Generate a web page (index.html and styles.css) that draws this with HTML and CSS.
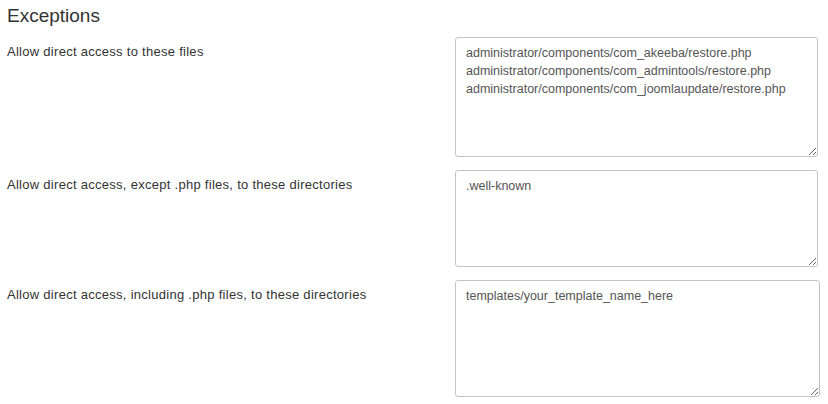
FILE: index.html
```html
<!DOCTYPE html>
<html>
<head>
<meta charset="utf-8">
<link rel="stylesheet" href="styles.css">
</head>
<body>
<div class="page">
  <h3 class="title">Exceptions</h3>
  <div class="row">
    <label class="label">Allow direct access to these files</label>
    <textarea class="field field-files">administrator/components/com_akeeba/restore.php
administrator/components/com_admintools/restore.php
administrator/components/com_joomlaupdate/restore.php</textarea>
  </div>
  <div class="row">
    <label class="label">Allow direct access, except .php files, to these directories</label>
    <textarea class="field field-dirs">.well-known</textarea>
  </div>
  <div class="row">
    <label class="label">Allow direct access, including .php files, to these directories</label>
    <textarea class="field field-php">templates/your_template_name_here</textarea>
  </div>
</div>
</body>
</html>
```
FILE: styles.css
```css
html, body {
  margin: 0;
  padding: 0;
  background: #fff;
}
.page {
  padding: 5px 0 0 7px;
  font-family: "Liberation Sans", Arial, sans-serif;
  color: #333;
}
.title {
  margin: 0 0 10px 0;
  font-size: 19px;
  line-height: 22px;
  font-weight: normal;
  color: #333;
}
.row {
  display: grid;
  grid-template-columns: 448px auto;
  align-items: start;
  margin-bottom: 13px;
}
.label {
  font-size: 13px;
  line-height: 18px;
  letter-spacing: 0.28px;
  padding-top: 6px;
  color: #333;
}
.field {
  box-sizing: border-box;
  margin: 0;
  padding: 6px 10px;
  border: 1px solid #c4c4c4;
  border-radius: 3px;
  font-family: "Liberation Sans", Arial, sans-serif;
  font-size: 12.5px;
  line-height: 18px;
  color: #555;
  background: #fff;
  resize: both;
  outline: none;
}
.field-files { width: 363px; height: 120px; }
.field-dirs { width: 363px; height: 97px; }
.field-php { width: 365px; height: 117px; }
```
